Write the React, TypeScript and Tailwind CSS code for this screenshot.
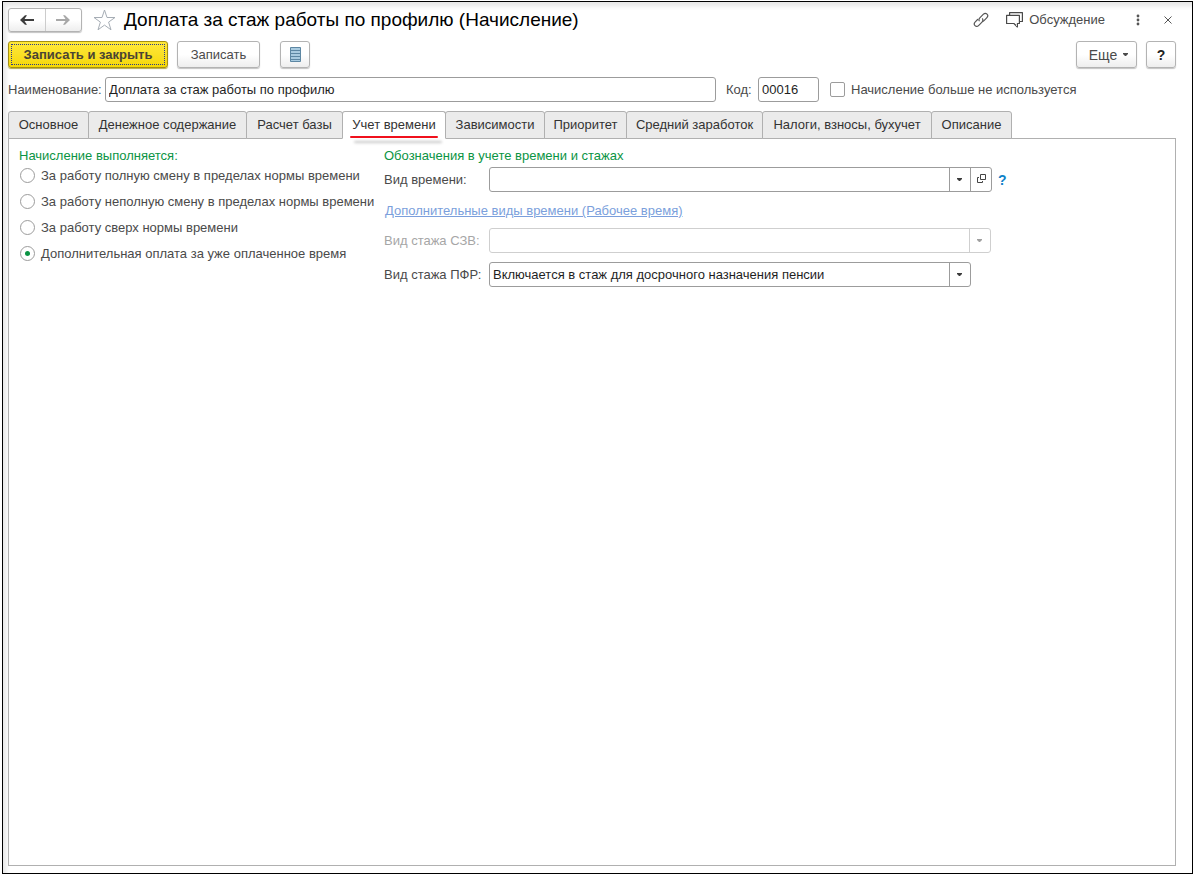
import { useState } from "react";
import type { ReactNode } from "react";
import { clsx } from "clsx";

const tabs = [
  { name: "Основное", width: "w-[81px]" },
  { name: "Денежное содержание", width: "w-[159px]" },
  { name: "Расчет базы", width: "w-[97px]" },
  { name: "Учет времени", width: "w-[104px]" },
  { name: "Зависимости", width: "w-[100px]" },
  { name: "Приоритет", width: "w-[83px]" },
  { name: "Средний заработок", width: "w-[137px]" },
  { name: "Налоги, взносы, бухучет", width: "w-[170px]" },
  { name: "Описание", width: "w-[81px]" },
];

const modes = [
  "За работу полную смену в пределах нормы времени",
  "За работу неполную смену в пределах нормы времени",
  "За работу сверх нормы времени",
  "Дополнительная оплата за уже оплаченное время",
];

const button =
  "flex items-center justify-center rounded-[3px] border border-[#b3b3b3] bg-linear-to-b from-white from-50% to-[#eeeeee] shadow-[0_1px_1px_#c4c4c4]";

function Caret() {
  return (
    <svg width="5" height="3" viewBox="0 0 5 3" aria-hidden="true">
      <path d="M0 0h5v1L3 3H2L0 1z" fill="currentColor" />
    </svg>
  );
}

function Arrow({ back }: { back?: boolean }) {
  return (
    <svg width="14" height="10" viewBox="0 0 14 10" fill="currentColor" aria-hidden="true">
      {back ? (
        <path d="M0 5L5 0.300H7L4.500 4H14V6H4.500L7 9.700H5z" />
      ) : (
        <path d="M14 5L9 0.300H7L9.500 4H0V6H9.500L7 9.700H9z" />
      )}
    </svg>
  );
}

type ComboProps = {
  id: string;
  options: string[];
  width: string;
  disabled?: boolean;
  children?: ReactNode;
};

function Combo({ id, options, width, disabled, children }: ComboProps) {
  const line = disabled ? "border-[#cfcfcf]" : "border-[#9c9c9c]";
  return (
    <div className={clsx("flex h-[25px] overflow-hidden rounded-[3px] border bg-white", width, line)}>
      <div className="grid min-w-0 flex-1">
        <select
          id={id}
          disabled={disabled}
          className="col-start-1 row-start-1 w-full min-w-0 appearance-none bg-transparent pr-6 pl-[3px] text-[#1f1f1f] outline-none"
        >
          {options.map((o) => (
            <option key={o}>{o}</option>
          ))}
        </select>
        <span
          className={clsx(
            "pointer-events-none col-start-1 row-start-1 flex w-[21px] items-center justify-center justify-self-end border-l pr-px pb-px",
            line,
            disabled ? "text-[#a0a0a0]" : "text-[#3c3c3c]",
          )}
        >
          <Caret />
        </span>
      </div>
      {children}
    </div>
  );
}

export default function App() {
  const [tab, setTab] = useState("Учет времени");
  const [mode, setMode] = useState(3);

  return (
    <div className="flex min-h-screen flex-col bg-white pt-px pl-0.5 font-['Liberation_Sans',Arial,sans-serif] text-[13px] leading-4 text-[#4a4a4a]">
      <main className="flex flex-1 flex-col border border-black bg-white pr-4 pb-[7px] pl-[5px] pt-1.5 shadow-[inset_5px_6px_5px_-2px_#e6e6e6]">
        <header className="flex h-6 items-center">
          <div className="flex h-6 w-[74px] rounded-[3px] border border-[#b3b3b3] bg-linear-to-b from-white from-50% to-[#eeeeee] shadow-[0_1px_1px_#c4c4c4]">
            <button aria-label="Назад" className="flex flex-1 items-center justify-center border-r border-[#cccccc] text-[#3c3c3c]">
              <Arrow back />
            </button>
            <button aria-label="Вперед" className="flex flex-1 items-center justify-center text-[#a8a8a8]">
              <Arrow />
            </button>
          </div>
          <button aria-label="В избранное" className="ml-[11px]">
            <svg width="23" height="22" viewBox="0 0 23 22" fill="#fff" stroke="#a6adb5" strokeWidth="1" aria-hidden="true">
              <path d="M11.5 1L14 8.5H22L15.6 13.1L18 20.8L11.5 16.1L5 20.8L7.4 13.1L1 8.5H9z" />
            </svg>
          </button>
          <h1 className="ml-2 text-[19px] leading-6 whitespace-nowrap text-black">Доплата за стаж работы по профилю (Начисление)</h1>
          <div className="ml-auto flex items-center">
            <button aria-label="Получить ссылку">
              <svg width="16" height="16" viewBox="0 0 16 16" fill="none" stroke="#555" strokeWidth="1.2" strokeLinecap="round" aria-hidden="true">
                <path d="M6.200 8.800C5.600 7.500 6 6.600 6.800 5.800L10.200 2.400C11.500 1.100 13 1.100 14 2.100C15 3.100 15 4.600 13.700 5.900L11 8.600C10.600 9 10.200 9.200 9.800 9.300" />
                <path d="M9.500 6.800C10.200 8.100 9.800 9.300 9 10.100L5.800 13.300C4.500 14.600 3 14.600 2 13.600C1 12.600 1 11.100 2.300 9.800L4.600 7.500" />
              </svg>
            </button>
            <button className="ml-[17px] flex items-center gap-1.5">
              <svg width="17" height="16" viewBox="0 0 17 16" fill="none" stroke="#4a4a4a" strokeWidth="1.2" strokeLinejoin="round" aria-hidden="true">
                <path d="M3.600 3V0.600H16.400V9.500H14" />
                <path d="M0.600 3.400H13.400V11.500H11.400V15L7.900 11.500H0.600z" fill="#fff" />
              </svg>
              Обсуждение
            </button>
            <button aria-label="Дополнительно" className="ml-[31px]">
              <svg width="4" height="12" viewBox="0 0 4 12" fill="#555" aria-hidden="true">
                <circle cx="2" cy="2" r="1.400" />
                <circle cx="2" cy="6" r="1.400" />
                <circle cx="2" cy="10" r="1.400" />
              </svg>
            </button>
            <button aria-label="Закрыть" className="mr-1 ml-6">
              <svg width="8" height="8" viewBox="0 0 8 8" fill="none" stroke="#555" aria-hidden="true">
                <path d="M0.500 0.500l7 7M7.500 0.500l-7 7" />
              </svg>
            </button>
          </div>
        </header>

        <div className="mt-[9px] flex h-[27px]">
          <button className="w-40 rounded-[3px] border border-[#a48f10] bg-linear-to-b from-[#ffe838] to-[#f5d800] p-0.5 font-bold text-[#4a4433] shadow-[0_1px_1px_#b5a84a]">
            <span className="flex h-full items-center justify-center border border-dotted border-[#2b3a8c]">Записать и закрыть</span>
          </button>
          <button className={clsx(button, "ml-[9px] w-[83px]")}>Записать</button>
          <button aria-label="Список" className={clsx(button, "ml-5 w-[30px]")}>
            <svg width="11" height="15" viewBox="0 0 11 15" aria-hidden="true">
              <path d="M0.500 0.500h10v14H0.500z" fill="#a9cbe0" stroke="#5d87a3" />
              <path d="M1 3.500h9M1 6.500h9M1 9.500h9M1 12.500h9" stroke="#5d87a3" />
            </svg>
          </button>
          <button className={clsx(button, "ml-auto w-[61px] gap-1.5 pl-1 text-sm")}>
            Еще
            <Caret />
          </button>
          <button className={clsx(button, "ml-[9px] w-[30px] text-sm font-bold text-[#222]")}>?</button>
        </div>

        <div className="mt-[9px] flex h-[25px] items-center">
          <label htmlFor="name" className="w-[97px] whitespace-nowrap">
            Наименование:
          </label>
          <input
            id="name"
            defaultValue="Доплата за стаж работы по профилю"
            className="h-[25px] w-[611px] min-w-0 rounded-[3px] border border-[#9c9c9c] px-[3px] text-[#1f1f1f] outline-none"
          />
          <label htmlFor="code" className="ml-2.5 w-8 whitespace-nowrap">
            Код:
          </label>
          <input
            id="code"
            defaultValue="00016"
            className="h-[25px] w-[61px] rounded-[3px] border border-[#9c9c9c] px-[3px] text-[#1f1f1f] outline-none"
          />
          <label className="ml-[11px] flex items-center gap-1.5 whitespace-nowrap">
            <input type="checkbox" className="size-[15px] appearance-none rounded-[2px] border border-[#9c9c9c] bg-white checked:bg-[#0b9444]" />
            Начисление больше не используется
          </label>
        </div>

        <div role="tablist" className="mt-[9px] flex">
          {tabs.map(({ name, width }) => (
            <button
              key={name}
              role="tab"
              aria-selected={tab === name}
              onClick={() => setTab(name)}
              className={clsx(
                "relative -mr-px -mb-px h-7 rounded-t-[3px] border border-[#b0b0b0] whitespace-nowrap text-[#333]",
                width,
                tab === name ? "z-10 border-b-white bg-white" : "bg-[#ebebeb]",
              )}
            >
              {name}
              {tab === name && (
                <span className="absolute inset-x-[7px] bottom-0 h-0.5 rounded-full bg-[#f0101c] shadow-[4px_5px_3px_#c4c4c4]" />
              )}
            </button>
          ))}
        </div>

        <section className="flex flex-1 items-start border border-[#b0b0b0] pt-[9px] pl-2.5">
          <fieldset className="w-[365px] shrink-0">
            <legend className="text-[#0b9444]">Начисление выполняется:</legend>
            <div className="mt-1 flex flex-col gap-2.5">
              {modes.map((m, i) => (
                <label key={m} className="flex h-4 items-start gap-1.5 whitespace-nowrap">
                  <input
                    type="radio"
                    name="mode"
                    checked={mode === i}
                    onChange={() => setMode(i)}
                    className="ml-px flex size-[15px] shrink-0 appearance-none items-center justify-center rounded-full border border-[#9c9c9c] bg-white before:size-[5px] before:rounded-full checked:before:bg-[#0b9444]"
                  />
                  {m}
                </label>
              ))}
            </div>
          </fieldset>

          <div className="flex min-w-0 flex-1 flex-col">
            <h2 className="text-[#0b9444]">Обозначения в учете времени и стажах</h2>
            <div className="mt-[3px] flex items-center">
              <label htmlFor="time" className="w-[105px] whitespace-nowrap">
                Вид времени:
              </label>
              <Combo id="time" options={[""]} width="w-[503px]">
                <button aria-label="Открыть" className="flex w-[21px] items-center justify-center border-l border-[#9c9c9c] pb-0.5">
                  <svg width="9" height="9" viewBox="0 0 9 9" fill="none" stroke="#444" aria-hidden="true">
                    <path d="M3.500 0.500h5v5h-5zM2 3.500H0.500v5h5V7" />
                  </svg>
                </button>
              </Combo>
              <button className="ml-1.5 text-sm font-bold text-[#0f82c8]">?</button>
            </div>
            <a href="#extra" className="mt-[11px] ml-px self-start text-[#7b9fdc] underline">
              Дополнительные виды времени (Рабочее время)
            </a>
            <div className="mt-[9px] flex items-center">
              <label htmlFor="szv" className="w-[105px] whitespace-nowrap text-[#a6a6a6]">
                Вид стажа СЗВ:
              </label>
              <Combo id="szv" options={[""]} width="w-[502px]" disabled />
            </div>
            <div className="mt-[9px] flex items-center">
              <label htmlFor="pfr" className="w-[105px] whitespace-nowrap">
                Вид стажа ПФР:
              </label>
              <Combo id="pfr" options={["Включается в стаж для досрочного назначения пенсии"]} width="w-[482px]" />
            </div>
          </div>
        </section>
      </main>
    </div>
  );
}
